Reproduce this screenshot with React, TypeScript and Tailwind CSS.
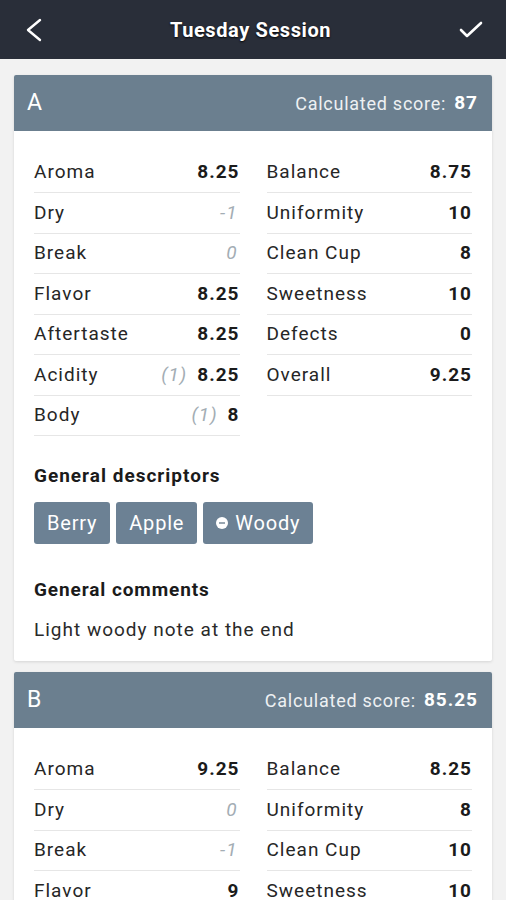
type Score = {
  label: string;
  value: string;
  muted?: boolean;
  note?: string;
};

type Sample = {
  name: string;
  score: string;
  left: Score[];
  right: Score[];
  descriptors?: { label: string; dot?: boolean }[];
  comment?: string;
};

const samples: Sample[] = [
  {
    name: "A",
    score: "87",
    left: [
      { label: "Aroma", value: "8.25" },
      { label: "Dry", value: "-1", muted: true },
      { label: "Break", value: "0", muted: true },
      { label: "Flavor", value: "8.25" },
      { label: "Aftertaste", value: "8.25" },
      { label: "Acidity", value: "8.25", note: "(1)" },
      { label: "Body", value: "8", note: "(1)" },
    ],
    right: [
      { label: "Balance", value: "8.75" },
      { label: "Uniformity", value: "10" },
      { label: "Clean Cup", value: "8" },
      { label: "Sweetness", value: "10" },
      { label: "Defects", value: "0" },
      { label: "Overall", value: "9.25" },
    ],
    descriptors: [{ label: "Berry" }, { label: "Apple" }, { label: "Woody", dot: true }],
    comment: "Light woody note at the end",
  },
  {
    name: "B",
    score: "85.25",
    left: [
      { label: "Aroma", value: "9.25" },
      { label: "Dry", value: "0", muted: true },
      { label: "Break", value: "-1", muted: true },
      { label: "Flavor", value: "9" },
      { label: "Aftertaste", value: "8.5" },
      { label: "Acidity", value: "8.75" },
      { label: "Body", value: "8.5" },
    ],
    right: [
      { label: "Balance", value: "8.25" },
      { label: "Uniformity", value: "8" },
      { label: "Clean Cup", value: "10" },
      { label: "Sweetness", value: "10" },
      { label: "Defects", value: "0" },
      { label: "Overall", value: "9" },
    ],
  },
];

const BackIcon = () => (
  <svg width="16" height="24" viewBox="0 0 16 24" fill="none">
    <polyline
      points="14,2 2,12 14,22"
      stroke="white"
      strokeWidth="2.4"
      strokeLinecap="round"
      strokeLinejoin="round"
    />
  </svg>
);

const CheckIcon = () => (
  <svg width="24" height="18" viewBox="0 0 24 18" fill="none">
    <polyline
      points="2,9 8,15 22,2"
      stroke="white"
      strokeWidth="2.6"
      strokeLinecap="round"
      strokeLinejoin="round"
    />
  </svg>
);

const ScoreRow = ({ item }: { item: Score }) => (
  <div className="flex h-[40.5px] items-center justify-between border-b border-[#e6e6e6] text-[19px] tracking-[1px]">
    <span className="text-[#262626]">{item.label}</span>
    <span className="flex items-center gap-[10px]">
      {item.note && <span className="italic text-[#a3adb4]">{item.note}</span>}
      {item.muted ? (
        <span className="pr-[2px] italic text-[#a3adb4]">{item.value}</span>
      ) : (
        <span className="font-bold text-[#1b1b1b]">{item.value}</span>
      )}
    </span>
  </div>
);

const SampleCard = ({ sample }: { sample: Sample }) => (
  <div className="overflow-hidden rounded-[2px] bg-white shadow-[0_1px_3px_rgba(0,0,0,0.12)]">
    <div className="flex h-[56px] items-center justify-between bg-[#6b7f8f] pl-[13px] pr-[14px] text-white">
      <span className="text-[23px]">{sample.name}</span>
      <span className="flex items-center gap-[8px]">
        <span className="text-[18px] tracking-[0.75px] text-[#eef1f3]">Calculated score:</span>
        <span className="text-[19px] font-bold tracking-[1px]">{sample.score}</span>
      </span>
    </div>
    <div className="px-[20px] pb-[19px] pt-[21.5px]">
      <div className="grid grid-cols-2 gap-x-[27px]">
        <div>
          {sample.left.map((item) => (
            <ScoreRow key={item.label} item={item} />
          ))}
        </div>
        <div>
          {sample.right.map((item) => (
            <ScoreRow key={item.label} item={item} />
          ))}
        </div>
      </div>
      {sample.descriptors && (
        <>
          <h3 className="mt-[29px] text-[19px] font-bold leading-[22px] tracking-[1px] text-[#1b1b1b]">
            General descriptors
          </h3>
          <div className="mt-[15px] flex gap-[6px]">
            {sample.descriptors.map((d) => (
              <span
                key={d.label}
                className="flex h-[42px] items-center gap-[7px] rounded-[3px] bg-[#6c8194] px-[13px] text-[20px] tracking-[0.8px] text-white"
              >
                {d.dot && (
                  <span className="flex h-[12px] w-[12px] items-center justify-center rounded-full bg-white">
                    <span className="h-[2px] w-[6px] bg-[#9aa7b2]" />
                  </span>
                )}
                {d.label}
              </span>
            ))}
          </div>
        </>
      )}
      {sample.comment && (
        <>
          <h3 className="mt-[35px] text-[19px] font-bold leading-[22px] tracking-[0.9px] text-[#1b1b1b]">
            General comments
          </h3>
          <p className="mt-[17px] text-[19px] leading-[24px] tracking-[1px] text-[#2a2a2a]">
            {sample.comment}
          </p>
        </>
      )}
    </div>
  </div>
);

export default function App() {
  return (
    <div className="h-[900px] overflow-hidden bg-[#f2f2f2] font-['Roboto',sans-serif]">
      <header className="flex h-[59px] items-center justify-between bg-[#292e39] pl-[26px] pr-[23px] text-white">
        <BackIcon />
        <h1 className="text-[20px] font-bold tracking-[0.6px] [text-shadow:0_1px_2px_rgba(0,0,0,0.9)]">
          Tuesday Session
        </h1>
        <CheckIcon />
      </header>
      <main className="flex flex-col gap-[11px] px-[14px] pt-[16px]">
        {samples.map((s) => (
          <SampleCard key={s.name} sample={s} />
        ))}
      </main>
    </div>
  );
}
